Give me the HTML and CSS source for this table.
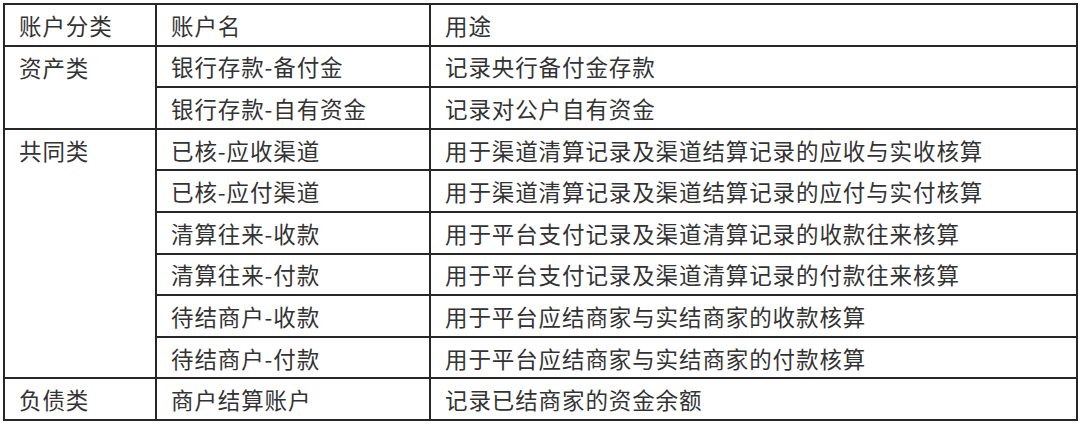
FILE: index.html
```html
<!DOCTYPE html>
<html lang="zh">
<head>
<meta charset="utf-8">
<title>账户分类</title>
<link rel="stylesheet" href="styles.css">
</head>
<body>
<div class="wrap">
<table class="accounts">
  <colgroup>
    <col class="c1"><col class="c2"><col class="c3">
  </colgroup>
  <tr><td>账户分类</td><td>账户名</td><td>用途</td></tr>
  <tr><td class="cat" rowspan="2">资产类</td><td>银行存款-备付金</td><td>记录央行备付金存款</td></tr>
  <tr><td>银行存款-自有资金</td><td>记录对公户自有资金</td></tr>
  <tr><td class="cat" rowspan="6">共同类</td><td>已核-应收渠道</td><td>用于渠道清算记录及渠道结算记录的应收与实收核算</td></tr>
  <tr><td>已核-应付渠道</td><td>用于渠道清算记录及渠道结算记录的应付与实付核算</td></tr>
  <tr><td>清算往来-收款</td><td>用于平台支付记录及渠道清算记录的收款往来核算</td></tr>
  <tr><td>清算往来-付款</td><td>用于平台支付记录及渠道清算记录的付款往来核算</td></tr>
  <tr><td>待结商户-收款</td><td>用于平台应结商家与实结商家的收款核算</td></tr>
  <tr><td>待结商户-付款</td><td>用于平台应结商家与实结商家的付款核算</td></tr>
  <tr><td>负债类</td><td>商户结算账户</td><td>记录已结商家的资金余额</td></tr>
</table>
</div>
</body>
</html>
```
FILE: styles.css
```css
html, body {
  margin: 0;
  padding: 0;
  background: #ffffff;
}
.wrap {
  padding: 3px 4px 0 3px;
}
.accounts {
  border-collapse: collapse;
  width: 1073px;
  table-layout: fixed;
  font-family: "Noto Sans CJK SC", "Noto Sans", sans-serif;
  font-size: 22.5px;
  letter-spacing: 0.9px;
  color: #333333;
}
.c1 { width: 152px; }
.c2 { width: 274px; }
.c3 { width: 647px; }
.accounts td {
  border: 2px solid #262626;
  height: 39.6px;
  padding: 0 0 0 14px;
  vertical-align: middle;
  white-space: nowrap;
  line-height: 24px;
}
.accounts td.cat {
  vertical-align: top;
  padding-top: 8px;
}
```
